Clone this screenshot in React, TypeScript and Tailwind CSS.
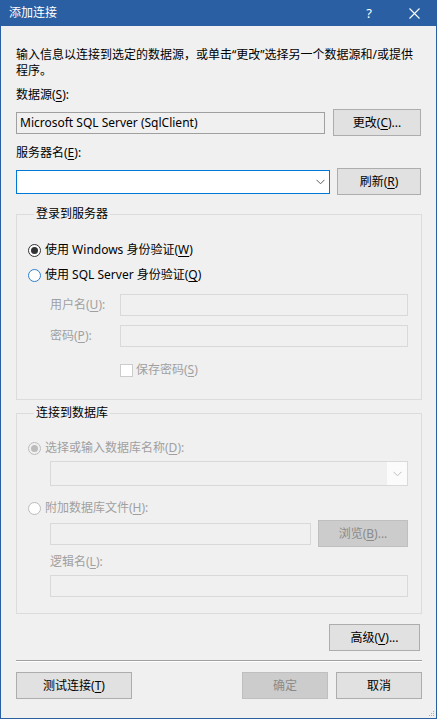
import React from "react";

const FONT = { fontFamily: '"Noto Sans", "Noto Sans CJK SC", sans-serif' };

function Btn({ children, w, disabled }: { children: React.ReactNode; w: string; disabled?: boolean }) {
  return (
    <div
      className={
        "h-[27px] flex items-center justify-center border text-[12px] leading-[16px] shrink-0 " +
        w +
        (disabled ? " bg-[#cccccc] border-[#bfbfbf] text-[#8a8a8a]" : " bg-[#e1e1e1] border-[#adadad] text-black")
      }
    >
      {children}
    </div>
  );
}

function K({ children }: { children: React.ReactNode }) {
  return <span className="underline underline-offset-[2px]">{children}</span>;
}

function Chevron({ color }: { color: string }) {
  return (
    <svg width="9" height="6" viewBox="0 0 9 6">
      <path d="M0.5 0.8 L4.5 4.8 L8.5 0.8" fill="none" stroke={color} strokeWidth="1" />
    </svg>
  );
}

function Radio({ checked, disabled, focus }: { checked?: boolean; disabled?: boolean; focus?: boolean }) {
  const border = disabled ? "border-[#bcbcbc]" : focus ? "border-[#2a7fd4]" : "border-[#333333]";
  const bg = disabled && checked ? "bg-[#f0f0f0]" : "bg-white";
  return (
    <div className={"w-[13px] h-[13px] rounded-full border flex items-center justify-center shrink-0 " + border + " " + bg}>
      {checked && <div className={"w-[7px] h-[7px] rounded-full " + (disabled ? "bg-[#bcbcbc]" : "bg-[#333333]")} />}
    </div>
  );
}

export default function App() {
  return (
    <div style={FONT} className="w-[437px] h-[719px] flex flex-col bg-[#f0f0f0] text-[12px] leading-[16px] text-black overflow-hidden relative">
      {/* title bar */}
      <div className="h-[26px] bg-[#2b5fa3] flex items-center text-white shrink-0">
        <div className="pl-[9px] text-[12px] flex-1">添加连接</div>
        <div className="w-[20px] text-center text-[13px] mr-[27px]">?</div>
        <div className="w-[16px] flex justify-center mr-[15px]">
          <svg width="11" height="11" viewBox="0 0 11 11">
            <path d="M0.5 0.5 L10.5 10.5 M10.5 0.5 L0.5 10.5" stroke="white" strokeWidth="1.1" />
          </svg>
        </div>
      </div>

      <div className="flex-1 flex flex-col border-x border-b border-[#2b5fa3] pl-[15px] pr-[14px]">
        <div className="mt-[21px] whitespace-nowrap">
          输入信息以连接到选定的数据源，或单击“更改”选择另一个数据源和/或提供
          <br />
          程序。
        </div>

        <div className="mt-[8px]">
          数据源(<K>S</K>):
        </div>
        <div className="mt-[6px] flex items-center h-[27px]">
          <div className="w-[309px] h-[22px] border border-[#a0a0a0] bg-[#f0f0f0] flex items-center pl-[3px] whitespace-nowrap">
            Microsoft SQL Server (SqlClient)
          </div>
          <div className="flex-1" />
          <Btn w="w-[88px] mr-[1px]">
            更改(<K>C</K>)...
          </Btn>
        </div>

        <div className="mt-[9px]">
          服务器名(<K>E</K>):
        </div>
        <div className="mt-[7px] flex items-center h-[27px]">
          <div className="w-[314px] h-[24px] border border-[#0078d7] bg-white flex items-center justify-end pr-[4px]">
            <Chevron color="#606060" />
          </div>
          <div className="flex-1" />
          <Btn w="w-[84px] mr-[1px]">
            刷新(<K>R</K>)
          </Btn>
        </div>

        {/* group 1 */}
        <fieldset className="mt-[11px] border border-[#dcdcdc] pl-[11px] pr-[13px] pb-[21px]">
          <legend className="ml-[6px] px-[2px] leading-[16px]">登录到服务器</legend>
          <div className="mt-[20px] flex items-center h-[16px]">
            <Radio checked />
            <div className="ml-[4px]">
              使用 Windows 身份验证(<K>W</K>)
            </div>
          </div>
          <div className="mt-[9px] flex items-center h-[16px]">
            <Radio focus />
            <div className="ml-[4px]">
              使用 SQL Server 身份验证(<K>Q</K>)
            </div>
          </div>
          <div className="mt-[11px] flex items-center h-[22px] text-[#a0a0a0]">
            <div className="ml-[22px] w-[70px]">
              用户名(<K>U</K>):
            </div>
            <div className="flex-1 h-[22px] border border-[#d9d9d9] bg-[#f0f0f0]" />
          </div>
          <div className="mt-[9px] flex items-center h-[22px] text-[#a0a0a0]">
            <div className="ml-[22px] w-[70px]">
              密码(<K>P</K>):
            </div>
            <div className="flex-1 h-[22px] border border-[#d9d9d9] bg-[#f0f0f0]" />
          </div>
          <div className="mt-[15px] flex items-center h-[16px] text-[#a0a0a0]">
            <div className="ml-[92px] w-[13px] h-[13px] border border-[#cccccc] bg-white" />
            <div className="ml-[3px]">
              保存密码(<K>S</K>)
            </div>
          </div>
        </fieldset>

        {/* group 2 */}
        <fieldset className="mt-[5px] border border-[#dcdcdc] pl-[11px] pr-[13px] pb-[16px]">
          <legend className="ml-[6px] px-[2px] leading-[16px]">连接到数据库</legend>
          <div className="mt-[19px] flex items-center h-[16px] text-[#a0a0a0]">
            <Radio checked disabled />
            <div className="ml-[4px]">
              选择或输入数据库名称(<K>D</K>):
            </div>
          </div>
          <div className="mt-[5px] ml-[22px] h-[25px] border border-[#d9d9d9] bg-[#f0f0f0] flex">
            <div className="flex-1" />
            <div className="w-[20px] bg-[#fbfbfb] flex items-center justify-center">
              <Chevron color="#c0c0c0" />
            </div>
          </div>
          <div className="mt-[14px] flex items-center h-[16px] text-[#a0a0a0]">
            <Radio disabled />
            <div className="ml-[4px]">
              附加数据库文件(<K>H</K>):
            </div>
          </div>
          <div className="mt-[4px] ml-[22px] flex items-center h-[27px] text-[#a0a0a0]">
            <div className="w-[261px] h-[22px] border border-[#d9d9d9] bg-[#f0f0f0]" />
            <div className="flex-1" />
            <Btn w="w-[90px]" disabled>
              浏览(<K>B</K>)...
            </Btn>
          </div>
          <div className="mt-[7px] ml-[22px] h-[16px] text-[#a0a0a0]">
            逻辑名(<K>L</K>):
          </div>
          <div className="mt-[5px] ml-[22px] h-[22px] border border-[#d9d9d9] bg-[#f0f0f0]" />
        </fieldset>

        <div className="mt-[10px] flex justify-end">
          <Btn w="w-[91px] mr-[2px]">
            高级(<K>V</K>)...
          </Btn>
        </div>

        <div className="mt-[9px] border-t border-[#a0a0a0] border-b border-b-white" />

        <div className="mt-[10px] flex items-center">
          <Btn w="w-[116px]">
            测试连接(<K>T</K>)
          </Btn>
          <div className="flex-1" />
          <Btn w="w-[86px]" disabled>
            确定
          </Btn>
          <div className="w-[8px]" />
          <Btn w="w-[86px]">取消</Btn>
        </div>
      </div>

      <svg className="absolute right-[2px] bottom-[2px]" width="6" height="6" viewBox="0 0 6 6">
        <rect x="4" y="0" width="1" height="1" fill="#b0b0b0" />
        <rect x="2" y="2" width="1" height="1" fill="#b0b0b0" />
        <rect x="4" y="2" width="1" height="1" fill="#b0b0b0" />
        <rect x="0" y="4" width="1" height="1" fill="#b0b0b0" />
        <rect x="2" y="4" width="1" height="1" fill="#b0b0b0" />
        <rect x="4" y="4" width="1" height="1" fill="#b0b0b0" />
      </svg>
    </div>
  );
}
